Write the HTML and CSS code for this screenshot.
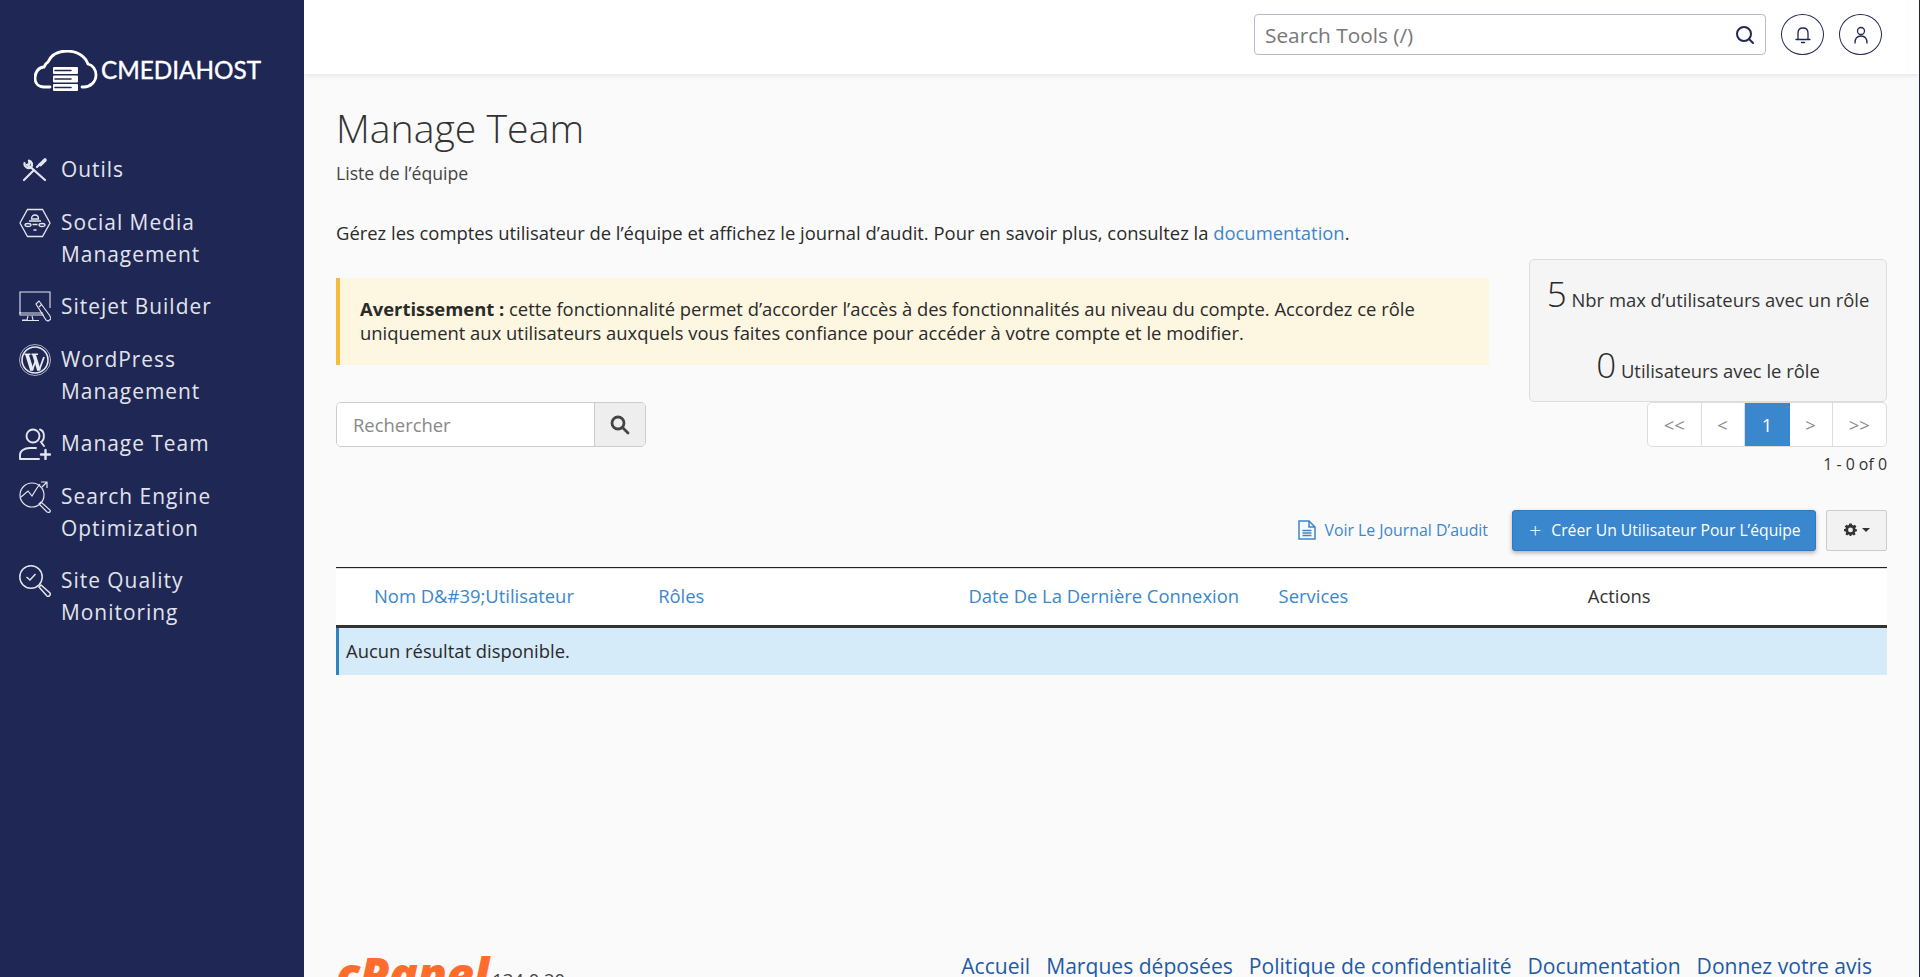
FILE: index.html
```html
<!DOCTYPE html>
<html lang="fr">
<head>
<meta charset="utf-8">
<title>Manage Team</title>
<link rel="stylesheet" href="styles.css">
</head>
<body>
<div class="app">
  <aside class="sidebar">
    <div class="brand">
      <svg class="brand-icon" viewBox="0 0 64 42" fill="none" stroke="#fff" stroke-width="2.800" stroke-linecap="round">
        <path d="M16 37 H10 C4 37 1 33 1 28 C1 22 5 17 10 17 C11 15 12 13 14 12 C17 5 24 1 33 1 C43 1 51 6 54 14 C59 15 62 20 62 25 C62 32 56 37 50 37 H48"/>
        <g fill="#fff" stroke="none">
          <rect x="19" y="17" width="25" height="7" rx="1"/>
          <rect x="19" y="25.500" width="25" height="7" rx="1"/>
          <rect x="19" y="34" width="25" height="7" rx="1"/>
        </g>
        <path stroke="#1f2754" stroke-width="1.600" d="M21 20.500H37M21 29H37M21 37.500H37"/>
      </svg>
      <span class="brand-name">CMEDIAHOST</span>
    </div>
    <nav class="nav">
      <a class="nav-item">
        <svg class="nav-icon" viewBox="0 0 32 32" fill="none" stroke="#e4e6ee" stroke-width="2.200" stroke-linecap="round" stroke-linejoin="round"><path d="M5.500 9 C5 13 9 15 12 13.500 L26 26"/><path d="M12 13.500 C14 11 13 7 10 6.500 L10.500 10 L8 10.800 Z"/><path d="M5 26 L15 16 M18 13 L21 10"/><path d="M21.500 10.500 L26 6" stroke-width="3.600"/></svg>
        <span>Outils</span>
      </a>
      <a class="nav-item">
        <svg class="nav-icon" viewBox="0 0 32 32" fill="none" stroke="#e4e6ee" stroke-width="1.300"><path d="M1 16 L8.500 2.500 H23.500 L31 16 L23.500 29.500 H8.500 Z"/><path d="M12.500 12 C12.500 9 14 8 16 8 C18 8 19.500 9 19.500 12 Z M10 14 H22"/><path d="M6 18 C6 16 12 16 12 18 C12 20 6 20 6 18 Z M20 18 C20 16 26 16 26 18 C26 20 20 20 20 18 Z M13.500 17.500 H18.500 M14.500 23 H17.500"/></svg>
        <span>Social Media<br>Management</span>
      </a>
      <a class="nav-item">
        <svg class="nav-icon" viewBox="0 0 32 32" fill="none" stroke="#e4e6ee" stroke-width="1.100"><path d="M24 22 H1 V1 H31 V17"/><path d="M1 21 V24 H25 M9 25 L8 29 H3 M13 25 L14 29 M3 29.500 H20"/><path d="M17 13 L20 10 L31 25 L32 28 L29 30 L27 29 Z M20 16 L23 13"/></svg>
        <span>Sitejet Builder</span>
      </a>
      <a class="nav-item">
        <svg class="nav-icon" viewBox="0 0 32 32" fill="none" stroke="#e8eaf0"><circle cx="16" cy="16" r="15.500" stroke-width=".7"/><circle cx="16" cy="16" r="13" stroke-width="1.600"/><path d="M8 10.500 L13 26.500 M15 10.500 L20 26.500" stroke-width="3.600"/><path d="M13 26.500 L16.500 17 M20 26.500 L25 13" stroke-width="1.800"/><path d="M5.500 10.300 H11.500 M12.500 10.300 H19" stroke-width="1.400"/></svg>
        <span>WordPress<br>Management</span>
      </a>
      <a class="nav-item">
        <svg class="nav-icon" viewBox="0 0 32 32" fill="none" stroke="#e4e6ee" stroke-width="1.900" stroke-linecap="round"><circle cx="14" cy="8" r="6.500"/><path d="M21 1.500 C26 3 26 12 22 14 L25 18"/><path d="M1 31 V27 C1 23 5 20 11 20 H17 M1 31 H20"/><path d="M26.500 22 V31 M22 26.500 H31" stroke-width="2.400"/></svg>
        <span>Manage Team</span>
      </a>
      <a class="nav-item">
        <svg class="nav-icon" viewBox="0 0 32 32" fill="none" stroke="#e4e6ee" stroke-width="1.200"><circle cx="13" cy="14" r="12"/><path d="M2 16 L9 10 L13 15 L18 7 L21 3 M22 1 H28 V7 M28 1 L23 6"/><path d="M20 23 L22 21 L31 29 C32 31 30 32 28 31 Z"/></svg>
        <span>Search Engine<br>Optimization</span>
      </a>
      <a class="nav-item">
        <svg class="nav-icon" viewBox="0 0 32 32" fill="none" stroke="#e4e6ee" stroke-width="1.500"><circle cx="12" cy="12" r="11.200"/><path d="M7.500 12 L11 15 L16.500 9"/><path d="M20 22 L22 20 L31 28 C32 30 29.500 32.500 28 31 Z"/></svg>
        <span>Site Quality<br>Monitoring</span>
      </a>
    </nav>
  </aside>
  <div class="main">
    <header class="topbar">
      <div class="tool-search">
        <span>Search Tools (/)</span>
        <svg class="tool-search-icon" viewBox="0 0 20 20" fill="none" stroke="#1f2754" stroke-width="2" stroke-linecap="round"><circle cx="9" cy="9" r="7"/><path d="M14 14 L18 18"/></svg>
      </div>
      <button class="round-btn">
        <svg viewBox="0 0 20 20" fill="none" stroke="#1f2754" stroke-width="1.300" stroke-linecap="round"><path d="M5 14 V8 C5 5 7 3 10 3 C13 3 15 5 15 8 V14"/><path d="M3 14.500 H17 M8.500 17.500 H11.500"/></svg>
      </button>
      <button class="round-btn">
        <svg viewBox="0 0 20 20" fill="none" stroke="#1f2754" stroke-width="1.300" stroke-linecap="round"><circle cx="10" cy="6" r="3.500"/><path d="M4 18 C4 13 7 11 10 11 C13 11 16 13 16 18"/></svg>
      </button>
    </header>
    <main class="content">
      <h1 class="title">Manage Team</h1>
      <p class="subtitle">Liste de l’équipe</p>
      <p class="intro">Gérez les comptes utilisateur de l’équipe et affichez le journal d’audit. Pour en savoir plus, consultez la <a class="link">documentation</a>.</p>

      <div class="notice-row">
        <div class="warning"><strong>Avertissement :</strong> cette fonctionnalité permet d’accorder l’accès à des fonctionnalités au niveau du compte. Accordez ce rôle uniquement aux utilisateurs auxquels vous faites confiance pour accéder à votre compte et le modifier.</div>
        <div class="stats">
          <div class="stat"><span class="stat-num">5</span> Nbr max d’utilisateurs avec un rôle</div>
          <div class="stat"><span class="stat-num">0</span> Utilisateurs avec le rôle</div>
        </div>
      </div>

      <div class="search-row">
        <div class="search">
          <div class="search-input">Rechercher</div>
          <div class="search-btn">
            <svg viewBox="0 0 20 20" fill="none" stroke="#444" stroke-width="2.800" stroke-linecap="round"><circle cx="8" cy="8" r="6"/><path d="M13 13 L18 18"/></svg>
          </div>
        </div>
        <div class="paging">
          <div class="pager">
            <span class="page page-wide">&lt;&lt;</span><span class="page">&lt;</span><span class="page page-active">1</span><span class="page">&gt;</span><span class="page page-wide">&gt;&gt;</span>
          </div>
          <div class="page-count">1 - 0 of 0</div>
        </div>
      </div>

      <div class="actions">
        <a class="audit">
          <svg viewBox="0 0 18 20" fill="none" stroke="#3a87cd" stroke-width="1.500"><path d="M1 1 H11 L17 7 V19 H1 Z M11 1 V7 H17"/><path d="M4.500 10.500 H13.500 M4.500 13 H13.500 M4.500 15.500 H13.500"/></svg>
          Voir Le Journal D’audit
        </a>
        <button class="primary"><span class="plus">+</span>Créer Un Utilisateur Pour L’équipe</button>
        <button class="gear">
          <svg viewBox="0 0 16 16"><path fill="#333" fill-rule="evenodd" d="M6.500 0.500 H9.500 L10 2.500 L11.500 3.200 L13.300 2.200 L15.300 4.700 L13.800 6.200 L14 7.500 L16 8 V10 L14 10.600 L13.300 12 L14.300 13.700 L12 15.500 L10.600 14 L9.500 14.400 L9 16 H7 L6.500 14.400 L5.300 14 L3.900 15.500 L1.700 13.700 L2.700 12 L2 10.600 L0 10 V7.500 L2 7 L2.300 5.800 L1 4.300 L3 2.200 L4.700 3.200 L6 2.500 Z M8 5.500 A3 3 0 1 0 8 11.500 A3 3 0 1 0 8 5.500 Z"/></svg>
          <span class="caret"></span>
        </button>
      </div>

      <div class="table">
        <div class="thead">
          <a class="th th-first">Nom D&amp;#39;Utilisateur</a>
          <a class="th">Rôles</a>
          <a class="th">Date De La Dernière Connexion</a>
          <a class="th">Services</a>
          <span class="th th-plain">Actions</span>
        </div>
        <div class="empty">Aucun résultat disponible.</div>
      </div>
    </main>
    <footer class="footer">
      <div class="footer-brand"><span class="cpanel">cPanel</span><span class="version">134.0.20</span></div>
      <div class="footer-links">
        <a>Accueil</a><a>Marques déposées</a><a>Politique de confidentialité</a><a>Documentation</a><a>Donnez votre avis</a>
      </div>
    </footer>
  </div>
</div>
</body>
</html>
```

FILE: styles.css
```css
* { box-sizing: border-box; }
html, body { margin: 0; height: 100%; overflow: hidden; }
body { font-family: "Open Sans", sans-serif; font-size: 18.420px; color: #2a2a2a; background: #fafafa; }
.app { display: flex; height: 977px; border-right: 1px solid #1f2754; }

.sidebar { width: 304px; flex: none; background: #1f2754; color: #e2e4ec; }
.brand { display: flex; gap: 3px; padding: 50px 0 0 34px; height: 154px; align-items: flex-start; }
.brand-icon { width: 64px; height: 42px; flex: none; }
.brand-name { font-family: "Lato", sans-serif; font-size: 24.300px; font-weight: 400; -webkit-text-stroke: .4px #fff; color: #fff; line-height: 42px; margin-top: -1px; }
.nav { display: flex; flex-direction: column; }
.nav-item { display: flex; gap: 10px; padding: 0 0 21px 19px; font-size: 20.900px; line-height: 31.500px; letter-spacing: 1px; }
.nav-icon { width: 32px; height: 32px; flex: none; }

.main { flex: 1; min-width: 0; display: flex; flex-direction: column; padding-right: 1px; }
.topbar { height: 74px; flex: none; background: #fff; box-shadow: 0 1px 6px rgba(0,0,0,.1); display: flex; align-items: center; justify-content: flex-end; gap: 15px; padding: 0 37px 5px 0; margin-right: -1px; }
.tool-search { width: 512px; height: 41px; border: 1px solid #b9b9cc; border-radius: 4px; display: flex; align-items: center; justify-content: space-between; padding: 0 10px 0 10px; font-size: 20.800px; color: #777; }
.tool-search-icon { width: 20px; height: 20px; }
.round-btn { width: 43px; height: 41px; border: 1.500px solid #1f2754; border-radius: 50%; background: #fff; padding: 0; display: flex; align-items: center; justify-content: center; }
.round-btn svg { width: 20px; height: 20px; }

.content { flex: 1; padding: 31px 31px 0 32px; min-height: 0; }
.title { margin: 0; font-size: 39.200px; font-weight: 300; line-height: 46px; color: #333; }
.subtitle { margin: 10px 0 0; font-size: 17.650px; line-height: 24px; color: #444; }
.intro { margin: 36px 0 0; line-height: 24px; }
.link, .th, .audit { color: #3a87cd; }

.notice-row { display: flex; justify-content: space-between; align-items: flex-start; margin-top: 14px; }
.warning { width: 1153px; margin-top: 19px; height: 87px; padding: 19px 20px 0 20px; background: #fdf6e1; border-left: 4px solid #f6bd3c; line-height: 24px; }
.stats { width: 358px; height: 143px; background: #f5f5f5; border: 1px solid #ddd; border-radius: 5px; padding: 12px 0 0; text-align: center; color: #333; }
.stat { height: 71px; line-height: 44px; }
.stat-num { font-size: 35px; font-weight: 350; color: #2a2a2a; }

.search-row { display: flex; justify-content: space-between; align-items: flex-start; }
.search { display: flex; width: 310px; height: 45px; border: 1px solid #ccc; border-radius: 5px; overflow: hidden; }
.search-input { flex: 1; background: #fff; padding: 0 16px; line-height: 43px; color: #888; }
.search-btn { width: 51px; border-left: 1px solid #ccc; background: #eee; display: flex; align-items: center; justify-content: center; }
.search-btn svg { width: 20px; height: 20px; }

.paging { display: flex; flex-direction: column; align-items: flex-end; }
.pager { display: flex; height: 45px; background: #fff; border: 1px solid #ddd; border-radius: 5px; overflow: hidden; }
.page { width: 43px; display: flex; align-items: center; justify-content: center; border-right: 1px solid #ddd; color: #888; }
.page:last-child { border-right: 0; }
.page-wide { width: 53.500px; }
.page-active { width: 45px; background: #3a87cd; color: #fff; border-right: 0; }
.page-count { font-size: 15.900px; line-height: 20px; margin-top: 7px; color: #333; }

.actions { display: flex; justify-content: flex-end; align-items: center; margin-top: 36px; height: 41px; }
.audit { display: flex; align-items: center; gap: 8px; font-size: 15.850px; margin-right: 24px; padding-bottom: 1px; }
.audit svg { width: 18px; height: 20px; }
.primary { width: 304px; height: 41px; background: #3a87cd; color: #fff; border: 1px solid #3079bd; border-radius: 3px; box-shadow: 0 2px 4px rgba(0,0,0,.3); font: inherit; font-size: 15.700px; padding: 0 0 1px 2px; margin-right: 10px; display: flex; align-items: center; justify-content: center; }
.plus { margin-right: 10px; font-size: 21px; font-weight: 300; line-height: 21px; }
.gear { width: 61px; height: 41px; background: #f2f2f2; border: 1px solid #ccc; border-radius: 2px; display: flex; align-items: center; justify-content: center; gap: 5px; padding: 0 0 2px; }
.gear svg { width: 13px; height: 13px; }
.caret { width: 0; height: 0; border-left: 4px solid transparent; border-right: 4px solid transparent; border-top: 4px solid #333; }

.table { margin-top: 16px; }
.thead { display: grid; grid-template-columns: repeat(5, 1fr); height: 61px; padding-bottom: 3px; background: #fff; border-top: 1px solid #222; border-bottom: 3px solid #333; box-shadow: inset 0 1px 0 #ddd; align-items: center; }
.th { padding-left: 12px; }
.th-first { padding-left: 38px; }
.th-plain { color: #333; padding-left: 11px; }
.empty { height: 47px; background: #d5ebf9; border-left: 3px solid #2f84bd; padding-left: 7px; line-height: 45px; }

.footer { flex: none; height: 21px; display: flex; justify-content: space-between; padding: 0 46px 0 32px; overflow: hidden; }
.footer-brand { display: flex; }
.cpanel { font-family: "Open Sans", sans-serif; font-size: 48px; line-height: 36px; font-weight: 800; font-style: italic; color: #ff6c2c; letter-spacing: -.7px; }
.version { font-size: 18.400px; line-height: 30px; padding: 9px 0 0 4px; color: #444; }
.footer-links { display: flex; gap: 16px; font-size: 21.100px; line-height: 30px; margin-top: -5px; color: #1f5aa6; }
```
